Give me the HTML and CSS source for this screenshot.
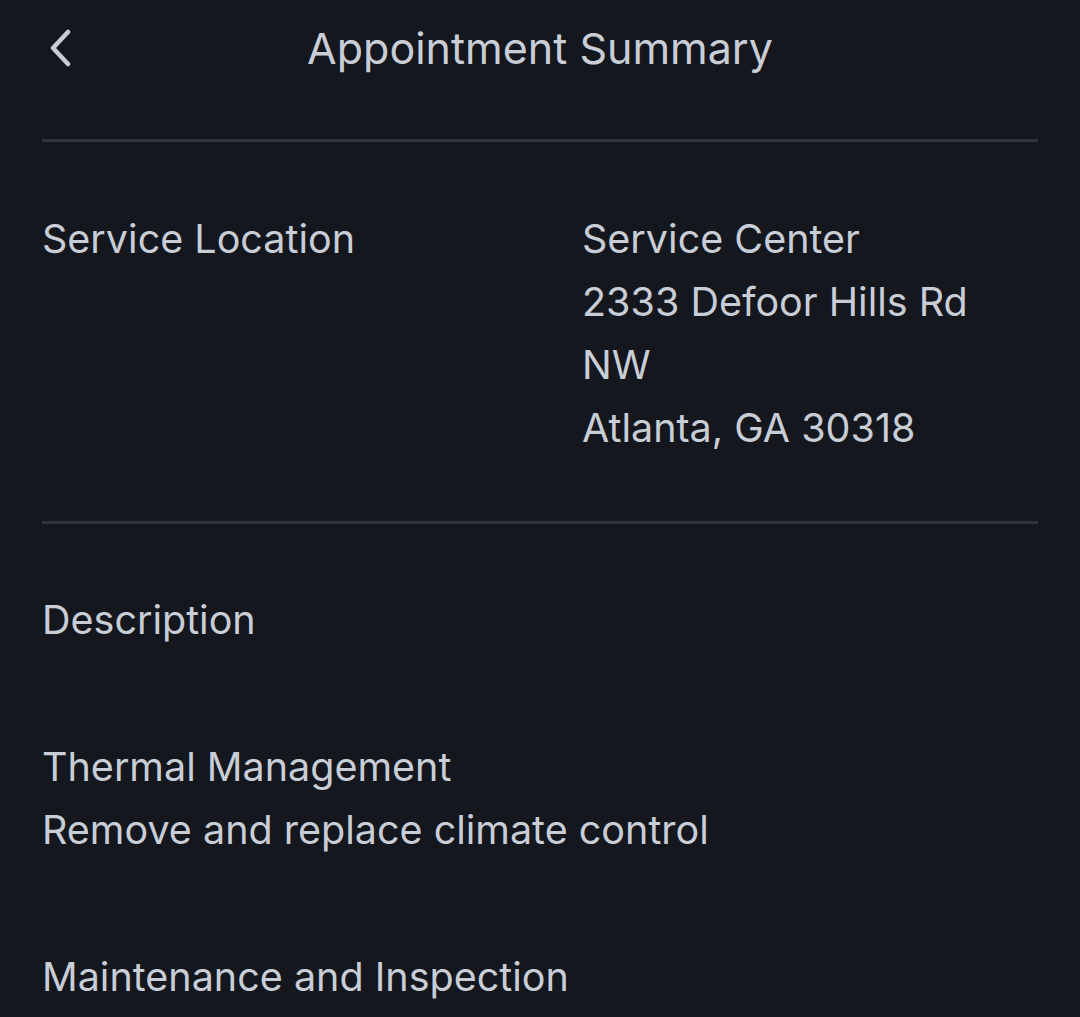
FILE: index.html
```html
<!DOCTYPE html>
<html lang="en">
<head>
    <meta charset="UTF-8">
    <meta name="viewport" content="width=device-width, initial-scale=1.0">
    <title>Appointment Summary</title>
    <link rel="stylesheet" href="styles.css">
</head>
<body>
    <header class="top-bar">
        <button class="back-btn" aria-label="Back">
            <svg width="28" height="40" viewBox="0 0 28 40">
                <path d="M22 3 L7 19 L22 35" fill="none" stroke="#c8ccd4" stroke-width="4.5" stroke-linecap="round" stroke-linejoin="round"/>
            </svg>
        </button>
        <h1>Appointment Summary</h1>
    </header>

    <section class="section location">
        <div class="label">Service Location</div>
        <div class="value">
            <p>Service Center</p>
            <p>2333 Defoor Hills Rd</p>
            <p>NW</p>
            <p>Atlanta, GA 30318</p>
        </div>
    </section>

    <section class="section description">
        <div class="label">Description</div>
        <div class="item">
            <p>Thermal Management</p>
            <p>Remove and replace climate control</p>
        </div>
        <div class="item">
            <p>Maintenance and Inspection</p>
        </div>
    </section>
</body>
</html>
```

FILE: styles.css
```css
body {
    background-color: #14171e;
    font-family: Inter, "Noto Sans", sans-serif;
    color: #c9cdd6;
    margin: 0;
    padding: 0 42px;
    overflow: hidden;
}
p {
    margin: 0;
}
.top-bar {
    position: relative;
    display: flex;
    justify-content: center;
    align-items: flex-start;
    height: 122px;
    padding-top: 17px;
    border-bottom: 3px solid #30353d;
}
.back-btn {
    position: absolute;
    left: 0;
    top: 29px;
    background: none;
    border: none;
    padding: 0 0 0 4px;
    cursor: pointer;
}
.top-bar h1 {
    margin: 0;
    font-size: 43px;
    font-weight: 400;
    line-height: 63px;
}
.section {
    font-size: 39.5px;
    line-height: 63px;
}
.location {
    display: flex;
    padding: 66px 0 61px;
    border-bottom: 3px solid #30353d;
}
.location .label {
    width: 540px;
}
.description {
    padding-top: 65px;
}
.description .item {
    margin-top: 84px;
}
```
